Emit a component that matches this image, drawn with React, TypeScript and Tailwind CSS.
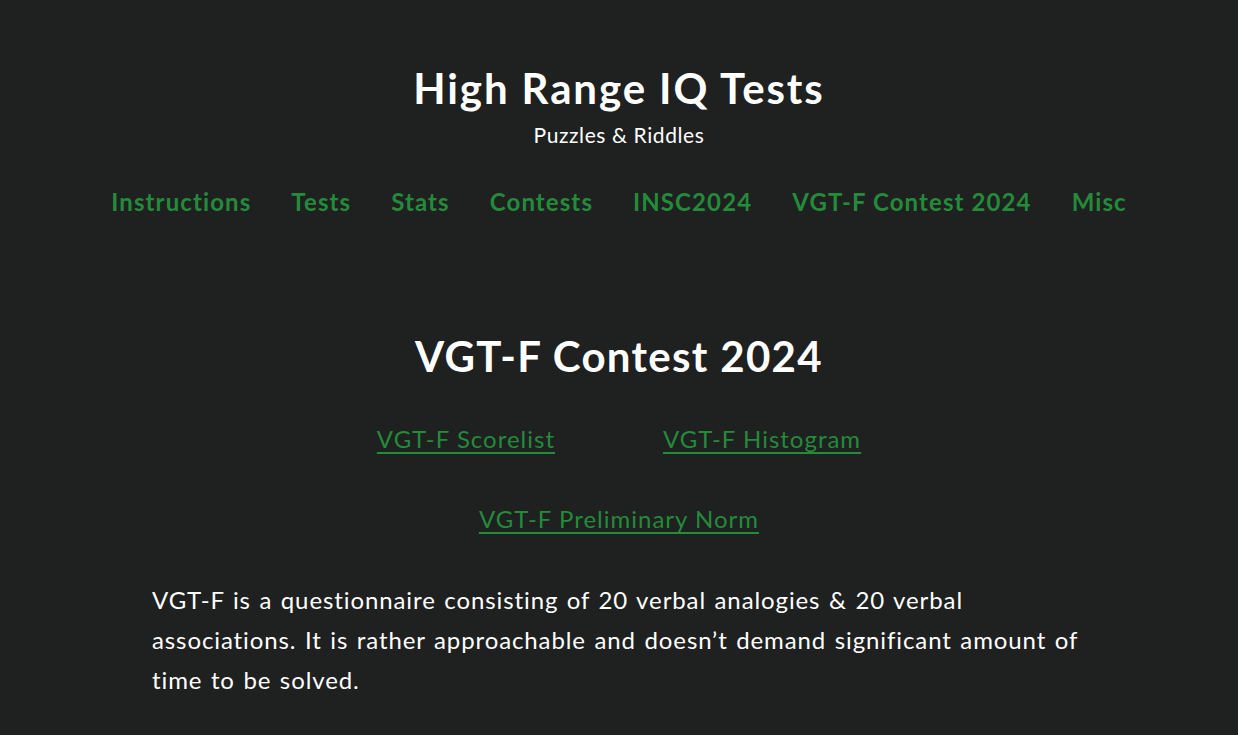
import React from 'react';

const navItems = ['Instructions', 'Tests', 'Stats', 'Contests', 'INSC2024', 'VGT-F Contest 2024', 'Misc'];

const font = { fontFamily: 'Lato, "Open Sans", sans-serif' };

export default function App() {
    return (
        <div className="min-h-screen bg-[#1f2020] text-white" style={font}>
            <header className="flex flex-col items-center pt-[62px]">
                <h1 className="text-[42px] font-bold leading-[52px] tracking-[1.9px]">High Range IQ Tests</h1>
                <p className="text-[21px] leading-[28px] mt-[7px] tracking-[0.6px]">Puzzles &amp; Riddles</p>
                <nav className="flex justify-center gap-[40px] mt-[37px]">
                    {navItems.map((item) => (
                        <a key={item} href="#" className="text-[24px] font-bold text-[#238b3a] leading-[32px] tracking-[1.1px]">
                            {item}
                        </a>
                    ))}
                </nav>
            </header>

            <main className="flex flex-col items-center mt-[112px]">
                <h2 className="text-[42px] font-bold leading-[52px] tracking-[1.3px]">VGT-F Contest 2024</h2>
                <div className="flex justify-center gap-[108px] mt-[41px]">
                    <a href="#" className="text-[24px] leading-[32px] text-[#238b3a] underline underline-offset-[4px] tracking-[1px]">VGT-F Scorelist</a>
                    <a href="#" className="text-[24px] leading-[32px] text-[#238b3a] underline underline-offset-[4px] tracking-[1px]">VGT-F Histogram</a>
                </div>
                <a href="#" className="mt-[48px] text-[24px] leading-[32px] text-[#238b3a] underline underline-offset-[4px] tracking-[1px]">VGT-F Preliminary Norm</a>
                <p className="w-[934px] mt-[45px] text-[24px] leading-[40px] tracking-[0.9px] [word-spacing:1.5px]">
                    VGT-F is a questionnaire consisting of 20 verbal analogies &amp; 20 verbal associations. It is rather approachable and doesn’t demand significant amount of time to be solved.
                </p>
            </main>
        </div>
    );
}
